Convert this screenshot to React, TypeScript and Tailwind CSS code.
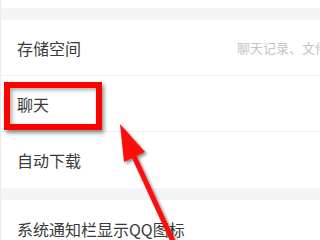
const Row = ({ label, extra }: { label: string; extra?: string }) => (
  <div className="flex items-center h-[56px] pl-4 border-b border-[#f1f1f3]">
    <span className="text-[16px] text-[#3a3a3a] whitespace-nowrap">{label}</span>
    {extra ? (
      <span className="ml-auto w-[83px] overflow-hidden whitespace-nowrap text-[13px] text-[#c4c4c4]">
        {extra}
      </span>
    ) : null}
  </div>
);

const Arrow = () => (
  <svg className="absolute left-0 top-0" width="320" height="240" viewBox="0 0 320 240">
    <defs>
      <filter id="sh" x="-50%" y="-50%" width="200%" height="200%">
        <feDropShadow dx="2" dy="2" stdDeviation="1.8" floodColor="#000" floodOpacity="0.45" />
      </filter>
    </defs>
    <g filter="url(#sh)" fill="#ff0a0a" stroke="none">
      <line x1="176" y1="250" x2="131" y2="152" stroke="#ff0a0a" strokeWidth="5" />
      <polygon points="119,124 144,152 123,162" />
    </g>
  </svg>
);

const App = () => {
  return (
    <div
      className="relative w-[320px] h-[240px] overflow-hidden bg-white border-l border-[#ececec]"
      style={{ fontFamily: '"Noto Sans CJK SC", "Noto Sans", sans-serif' }}
    >
      <div className="h-[8px] bg-white" />
      <div className="h-[12px] bg-[#f3f4f6]" />
      <Row label="存储空间" extra="聊天记录、文件等" />
      <Row label="聊天" />
      <div className="flex items-center h-[56px] pl-4">
        <span className="text-[16px] text-[#3a3a3a]">自动下载</span>
      </div>
      <div className="h-[12px] bg-[#f3f4f6]" />
      <div className="flex items-center h-[58px] pl-4">
        <span className="text-[16px] text-[#3a3a3a] whitespace-nowrap">系统通知栏显示QQ图标</span>
      </div>

      <div className="absolute left-[3px] top-[82px] w-[98px] h-[48px] border-[6px] border-[#ff0000] shadow-[2px_3px_4px_rgba(0,0,0,0.45),inset_2px_2px_4px_rgba(0,0,0,0.35)]" />
      <Arrow />
    </div>
  );
};

export default App;
